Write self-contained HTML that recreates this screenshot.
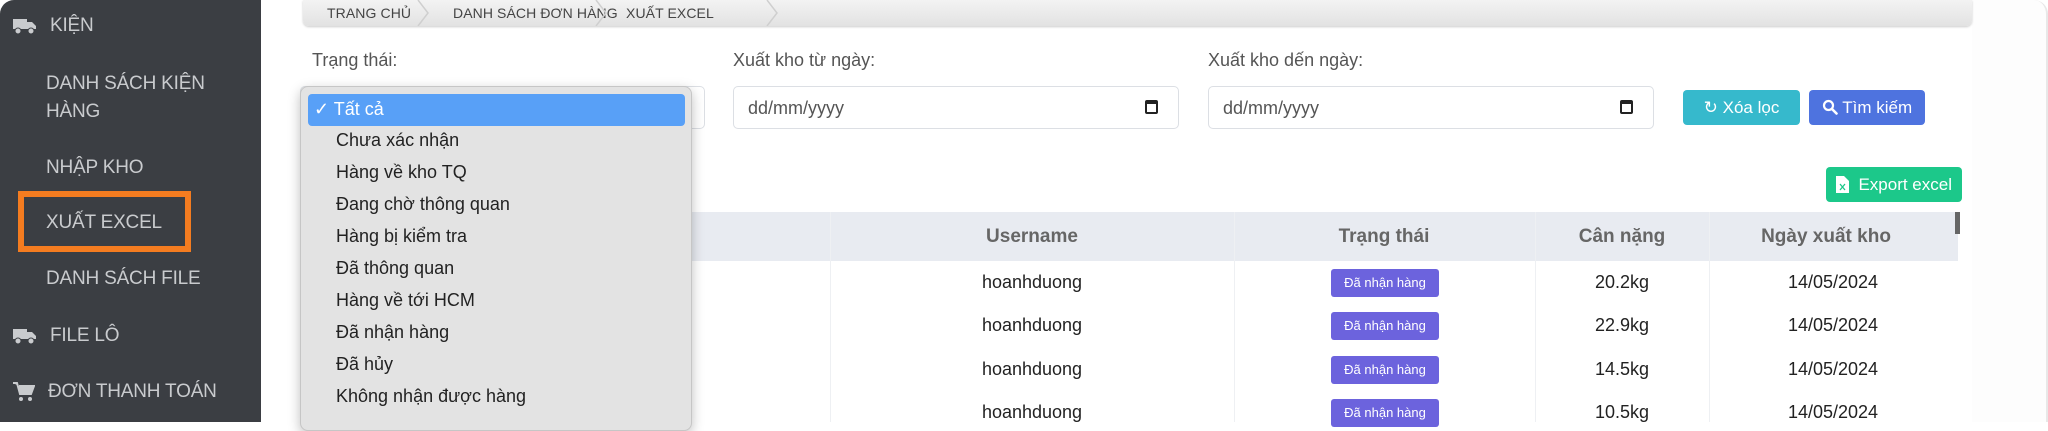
<!DOCTYPE html>
<html><head><meta charset="utf-8">
<style>
*{box-sizing:border-box;margin:0;padding:0}
body{width:2048px;height:422px;overflow:hidden;background:#fff;font-family:"Liberation Sans",sans-serif;position:relative}
.abs{position:absolute}
#side{left:0;top:0;width:261px;height:422px;background:#3b3e43;border-top-left-radius:14px}
.si{position:absolute;color:#c9cbce;font-size:19px;white-space:nowrap;letter-spacing:-0.2px}
#main{left:261px;top:0;width:1711px;height:422px;background:#fff}
#right{left:1972px;top:0;width:76px;height:422px;background:#fdfdfd;border-right:2px solid #e8e8e8;border-top-right-radius:14px}
.bc{top:0;left:303px;width:1669px;height:26px;background:linear-gradient(#f3f3f3,#e2e2e2);border-radius:0 0 6px 6px;box-shadow:0 1px 2px #ccc}
.bct{position:absolute;top:5px;font-size:14px;color:#444;letter-spacing:0.1px}
.lbl{font-size:18px;color:#555}
.inp{height:43px;border:1px solid #dcdfe4;border-radius:5px;background:#fff;font-size:18px;color:#555;padding:11px 14px}
.cal{position:absolute;right:20px;top:13px;width:13px;height:14px;border:2px solid #222;border-top-width:4px;border-radius:2px}
.btn{color:#fff;font-size:17px;border-radius:4px;text-align:center;line-height:35px}
.th{top:212px;height:49px;background:#e8ebf1;font-size:19px;color:#666;font-weight:bold;line-height:49px;text-align:center}
.td{font-size:18px;color:#222;text-align:center;width:300px;margin-left:-150px}
.bd{background:#6c63dd;color:#fff;font-size:13px;border-radius:3px;width:108px;height:28px;line-height:28px;text-align:center}
#dd{left:300px;top:86px;width:392px;height:345px;background:#e3e3e3;border:1px solid #c6c6c6;border-radius:8px;box-shadow:0 4px 12px rgba(0,0,0,.25)}
.it{position:absolute;left:35px;font-size:18px;color:#222}
</style></head><body>
<div id="side" class="abs">
 <svg class="abs" style="left:13px;top:17px" width="24" height="18" viewBox="0 0 24 18"><path d="M0 2h14v10H0zM14 5h5l4 4v3h-9z" fill="#c9cbce"/><circle cx="5" cy="14" r="3" fill="#c9cbce" stroke="#3b3e43"/><circle cx="18" cy="14" r="3" fill="#c9cbce" stroke="#3b3e43"/></svg>
 <div class="si" style="left:50px;top:15px">KIỆN</div>
 <div class="si" style="left:46px;top:73px">DANH SÁCH KIỆN</div>
 <div class="si" style="left:46px;top:101px">HÀNG</div>
 <div class="si" style="left:46px;top:157px">NHẬP KHO</div>
 <div class="abs" style="left:18px;top:191px;width:173px;height:61px;border:6px solid #f47c20"></div>
 <div class="si" style="left:46px;top:212px">XUẤT EXCEL</div>
 <div class="si" style="left:46px;top:268px">DANH SÁCH FILE</div>
 <svg class="abs" style="left:13px;top:327px" width="24" height="18" viewBox="0 0 24 18"><path d="M0 2h14v10H0zM14 5h5l4 4v3h-9z" fill="#c9cbce"/><circle cx="5" cy="14" r="3" fill="#c9cbce" stroke="#3b3e43"/><circle cx="18" cy="14" r="3" fill="#c9cbce" stroke="#3b3e43"/></svg>
 <div class="si" style="left:50px;top:325px">FILE LÔ</div>
 <svg class="abs" style="left:13px;top:382px" width="22" height="20" viewBox="0 0 22 20"><path d="M0 1h4l3 11h11l3-8H6" fill="#c9cbce" stroke="#c9cbce" stroke-width="2"/><circle cx="8" cy="17" r="2" fill="#c9cbce"/><circle cx="17" cy="17" r="2" fill="#c9cbce"/></svg>
 <div class="si" style="left:48px;top:381px">ĐƠN THANH TOÁN</div>
</div>
<div id="main" class="abs"></div>
<div id="right" class="abs"></div>
<div class="abs bc">
 <div class="bct" style="left:24px">TRANG CHỦ</div>
 <div class="bct" style="left:150px">DANH SÁCH ĐƠN HÀNG</div>
 <div class="bct" style="left:323px">XUẤT EXCEL</div>
 <svg class="abs" style="left:0;top:0" width="480" height="26"><path d="M115 0l10 13-10 13M293 0l10 13-10 13M464 0l10 13-10 13" fill="none" stroke="#cfcfcf" stroke-width="1.5"/></svg>
</div>
<div class="abs lbl" style="left:312px;top:50px">Trạng thái:</div>
<div class="abs lbl" style="left:733px;top:50px">Xuất kho từ ngày:</div>
<div class="abs lbl" style="left:1208px;top:50px">Xuất kho dến ngày:</div>
<div class="abs inp" style="left:300px;top:86px;width:405px"></div>
<div class="abs inp" style="left:733px;top:86px;width:446px">dd/mm/yyyy<div class="cal"></div></div>
<div class="abs inp" style="left:1208px;top:86px;width:446px">dd/mm/yyyy<div class="cal"></div></div>
<div class="abs btn" style="left:1683px;top:90px;width:117px;background:#36b9cc">&#8635; Xóa lọc</div>
<div class="abs btn" style="left:1809px;top:90px;width:116px;background:#4e73df"><svg width="16" height="16" viewBox="0 0 16 16" style="vertical-align:-2px"><circle cx="6.5" cy="6.5" r="4.5" fill="none" stroke="#fff" stroke-width="2.2"/><path d="M10 10l4.5 4.5" stroke="#fff" stroke-width="2.6" stroke-linecap="round"/></svg> Tìm kiếm</div>
<div class="abs btn" style="left:1826px;top:167px;width:136px;background:#1cc88a;line-height:35px"><svg width="13" height="17" viewBox="0 0 13 17" style="vertical-align:-3px"><path d="M0 0h8l5 5v12H0z" fill="#fff"/><path d="M4 8l5 6M9 8l-5 6" stroke="#1cc88a" stroke-width="1.3"/></svg>&nbsp; Export excel</div>
<div class="abs th" style="left:303px;width:1655px"></div>
<div class="abs" style="left:830px;top:212px;width:1px;height:210px;background:#eef0f3"></div>
<div class="abs" style="left:1234px;top:212px;width:1px;height:210px;background:#eef0f3"></div>
<div class="abs" style="left:1535px;top:212px;width:1px;height:210px;background:#eef0f3"></div>
<div class="abs" style="left:1709px;top:212px;width:1px;height:210px;background:#eef0f3"></div>
<div class="abs" style="left:1955px;top:212px;width:5px;height:22px;background:#666"></div>
<div class="abs th" style="left:882px;width:300px;background:none">Username</div>
<div class="abs th" style="left:1234px;width:300px;background:none">Trạng thái</div>
<div class="abs th" style="left:1472px;width:300px;background:none">Cân nặng</div>
<div class="abs th" style="left:1676px;width:300px;background:none">Ngày xuất kho</div>
<div class="abs td" style="left:1032px;top:272px">hoanhduong</div>
<div class="abs td" style="left:1032px;top:315px">hoanhduong</div>
<div class="abs td" style="left:1032px;top:359px">hoanhduong</div>
<div class="abs td" style="left:1032px;top:402px">hoanhduong</div>
<div class="abs bd" style="left:1331px;top:269px">Đã nhận hàng</div>
<div class="abs bd" style="left:1331px;top:312px">Đã nhận hàng</div>
<div class="abs bd" style="left:1331px;top:356px">Đã nhận hàng</div>
<div class="abs bd" style="left:1331px;top:399px">Đã nhận hàng</div>
<div class="abs td" style="left:1622px;top:272px">20.2kg</div>
<div class="abs td" style="left:1622px;top:315px">22.9kg</div>
<div class="abs td" style="left:1622px;top:359px">14.5kg</div>
<div class="abs td" style="left:1622px;top:402px">10.5kg</div>
<div class="abs td" style="left:1833px;top:272px">14/05/2024</div>
<div class="abs td" style="left:1833px;top:315px">14/05/2024</div>
<div class="abs td" style="left:1833px;top:359px">14/05/2024</div>
<div class="abs td" style="left:1833px;top:402px">14/05/2024</div>
<div id="dd" class="abs">
 <div class="abs" style="left:7px;top:7px;width:377px;height:32px;background:#58a0f7;border-radius:4px"></div>
 <div class="it" style="left:13px;top:12px;color:#fff">&#10003; Tất cả</div>
 <div class="it" style="top:43px">Chưa xác nhận</div>
 <div class="it" style="top:75px">Hàng về kho TQ</div>
 <div class="it" style="top:107px">Đang chờ thông quan</div>
 <div class="it" style="top:139px">Hàng bị kiểm tra</div>
 <div class="it" style="top:171px">Đã thông quan</div>
 <div class="it" style="top:203px">Hàng về tới HCM</div>
 <div class="it" style="top:235px">Đã nhận hàng</div>
 <div class="it" style="top:267px">Đã hủy</div>
 <div class="it" style="top:299px">Không nhận được hàng</div>
</div>
</body></html>
